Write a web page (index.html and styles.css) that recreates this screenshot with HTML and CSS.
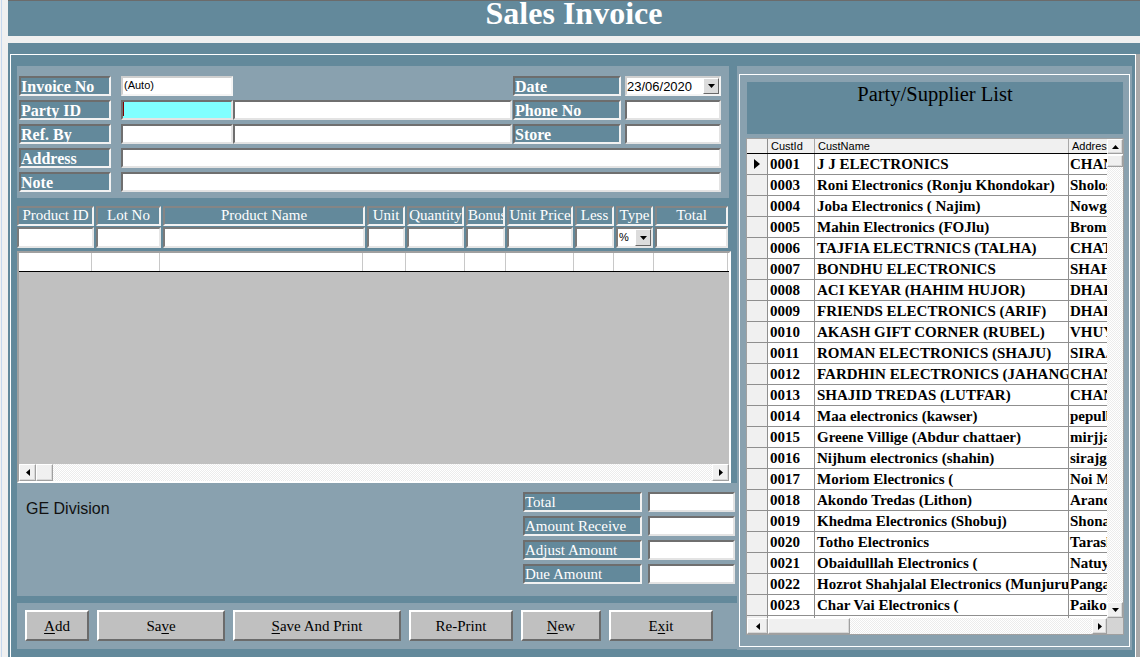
FILE: index.html
```html
<!DOCTYPE html>
<html>
<head>
<meta charset="utf-8">
<title>Sales Invoice</title>
<link rel="stylesheet" href="styles.css">
</head>
<body>
<div class="window">
  <div class="edge"></div>
  <div class="main">
    <div class="titlebar">Sales Invoice</div>
    <div class="band"></div>
    <div class="workspace">
      <div class="outer">
        <div class="left">
          <div class="form">
            <div class="lbl c1">Invoice No</div>
            <div class="inp light c3 auto">(Auto)</div>
            <div class="lbl c6">Date</div>
            <div class="inp light c8 date"><span class="dtext">23/06/2020</span><span class="ddbtn"><svg width="7" height="4" viewBox="0 0 7 4"><path d="M0 0H7L3.5 4Z"/></svg></span></div>

            <div class="lbl c1">Party ID</div>
            <div class="inp c3 cyan"><span class="caret"></span></div>
            <div class="inp c4"></div>
            <div class="lbl c6">Phone No</div>
            <div class="inp c8"></div>

            <div class="lbl c1">Ref. By</div>
            <div class="inp c3"></div>
            <div class="inp c4"></div>
            <div class="lbl c6">Store</div>
            <div class="inp c8"></div>

            <div class="lbl c1">Address</div>
            <div class="inp cwide"></div>

            <div class="lbl c1">Note</div>
            <div class="inp cwide"></div>
          </div>

          <div class="pcols phead">
            <div class="ph">Product ID</div>
            <div class="ph">Lot No</div>
            <div class="ph">Product Name</div>
            <div class="ph">Unit</div>
            <div class="ph">Quantity</div>
            <div class="ph">Bonus</div>
            <div class="ph">Unit Price</div>
            <div class="ph">Less</div>
            <div class="ph">Type</div>
            <div class="ph">Total</div>
          </div>
          <div class="pcols pinrow">
            <div class="pi"></div>
            <div class="pi"></div>
            <div class="pi"></div>
            <div class="pi"></div>
            <div class="pi"></div>
            <div class="pi"></div>
            <div class="pi"></div>
            <div class="pi"></div>
            <div class="pi ptype"><span class="pct">%</span><span class="ddbtn tbtn"><svg width="7" height="4" viewBox="0 0 7 4"><path d="M0 0H7L3.5 4Z"/></svg></span></div>
            <div class="pi"></div>
          </div>

          <div class="grid">
            <div class="ghead">
              <div class="gc" style="width:73px"></div>
              <div class="gc" style="width:68px"></div>
              <div class="gc" style="width:203px"></div>
              <div class="gc" style="width:43px"></div>
              <div class="gc" style="width:59px"></div>
              <div class="gc" style="width:41px"></div>
              <div class="gc" style="width:68px"></div>
              <div class="gc" style="width:40px"></div>
              <div class="gc" style="width:40px"></div>
              <div class="gc" style="width:74px"></div>
            </div>
            <div class="garea"></div>
            <div class="hscroll">
              <div class="sbtn"><svg width="4" height="7" viewBox="0 0 4 7"><path d="M4 0V7L0 3.5Z"/></svg></div>
              <div class="sthumb"></div>
              <div class="strack"></div>
              <div class="sbtn"><svg width="4" height="7" viewBox="0 0 4 7"><path d="M0 0V7L4 3.5Z"/></svg></div>
            </div>
          </div>

          <div class="lower">
            <div class="ge">GE Division</div>
            <div class="totals">
              <div class="tl">Total</div><div class="inp"></div>
              <div class="tl">Amount Receive</div><div class="inp"></div>
              <div class="tl">Adjust Amount</div><div class="inp"></div>
              <div class="tl">Due Amount</div><div class="inp"></div>
            </div>
          </div>

          <div class="buttons">
            <div class="btn w64"><span><u>A</u>dd</span></div>
            <div class="btn w128"><span>Sa<u>v</u>e</span></div>
            <div class="btn w168"><span><u>S</u>ave And Print</span></div>
            <div class="btn w104"><span>Re-Print</span></div>
            <div class="btn w80"><span><u>N</u>ew</span></div>
            <div class="btn w104"><span>E<u>x</u>it</span></div>
          </div>
        </div>

        <div class="right">
          <div class="rbox">
            <div class="rhead">Party/Supplier List</div>
            <div class="list">
              <div class="lcontent">
                <div class="lrow lhdr">
                  <div class="sel"></div>
                  <div class="lc cid">CustId</div>
                  <div class="lc cname">CustName</div>
                  <div class="lc caddr">Address</div>
                </div>
                <div class="lrows">
                  <div class="lrow"><div class="sel"><svg width="6" height="10" viewBox="0 0 6 10"><path d="M0 0L6 5L0 10Z"/></svg></div><div class="lc cid">0001</div><div class="lc cname">J J ELECTRONICS</div><div class="lc caddr">CHANDPUR</div></div>
                  <div class="lrow"><div class="sel"></div><div class="lc cid">0003</div><div class="lc cname">Roni Electronics (Ronju Khondokar)</div><div class="lc caddr">Sholoshohor</div></div>
                  <div class="lrow"><div class="sel"></div><div class="lc cid">0004</div><div class="lc cname">Joba Electronics ( Najim)</div><div class="lc caddr">Nowgaon</div></div>
                  <div class="lrow"><div class="sel"></div><div class="lc cid">0005</div><div class="lc cname">Mahin Electronics (FOJlu)</div><div class="lc caddr">Brommonbaria</div></div>
                  <div class="lrow"><div class="sel"></div><div class="lc cid">0006</div><div class="lc cname">TAJFIA ELECTRNICS (TALHA)</div><div class="lc caddr">CHATMOHOR</div></div>
                  <div class="lrow"><div class="sel"></div><div class="lc cid">0007</div><div class="lc cname">BONDHU ELECTRONICS</div><div class="lc caddr">SHAHRASTI</div></div>
                  <div class="lrow"><div class="sel"></div><div class="lc cid">0008</div><div class="lc cname">ACI KEYAR (HAHIM HUJOR)</div><div class="lc caddr">DHAKA</div></div>
                  <div class="lrow"><div class="sel"></div><div class="lc cid">0009</div><div class="lc cname">FRIENDS ELECTRONICS (ARIF)</div><div class="lc caddr">DHAKA</div></div>
                  <div class="lrow"><div class="sel"></div><div class="lc cid">0010</div><div class="lc cname">AKASH GIFT CORNER (RUBEL)</div><div class="lc caddr">VHUYAPUR</div></div>
                  <div class="lrow"><div class="sel"></div><div class="lc cid">0011</div><div class="lc cname">ROMAN ELECTRONICS (SHAJU)</div><div class="lc caddr">SIRAJGANJ</div></div>
                  <div class="lrow"><div class="sel"></div><div class="lc cid">0012</div><div class="lc cname">FARDHIN ELECTRONICS (JAHANGIR)</div><div class="lc caddr">CHANDPUR</div></div>
                  <div class="lrow"><div class="sel"></div><div class="lc cid">0013</div><div class="lc cname">SHAJID TREDAS (LUTFAR)</div><div class="lc caddr">CHANDPUR</div></div>
                  <div class="lrow"><div class="sel"></div><div class="lc cid">0014</div><div class="lc cname">Maa electronics (kawser)</div><div class="lc caddr">pepulbari</div></div>
                  <div class="lrow"><div class="sel"></div><div class="lc cid">0015</div><div class="lc cname">Greene Villige (Abdur chattaer)</div><div class="lc caddr">mirjjapur</div></div>
                  <div class="lrow"><div class="sel"></div><div class="lc cid">0016</div><div class="lc cname">Nijhum electronics (shahin)</div><div class="lc caddr">sirajganj</div></div>
                  <div class="lrow"><div class="sel"></div><div class="lc cid">0017</div><div class="lc cname">Moriom Electronics (</div><div class="lc caddr">Noi Mile</div></div>
                  <div class="lrow"><div class="sel"></div><div class="lc cid">0018</div><div class="lc cname">Akondo Tredas (Lithon)</div><div class="lc caddr">Arandi</div></div>
                  <div class="lrow"><div class="sel"></div><div class="lc cid">0019</div><div class="lc cname">Khedma Electronics (Shobuj)</div><div class="lc caddr">Shonatola</div></div>
                  <div class="lrow"><div class="sel"></div><div class="lc cid">0020</div><div class="lc cname">Totho Electronics</div><div class="lc caddr">Tarash</div></div>
                  <div class="lrow"><div class="sel"></div><div class="lc cid">0021</div><div class="lc cname">Obaidulllah Electronics (</div><div class="lc caddr">Natuypara</div></div>
                  <div class="lrow"><div class="sel"></div><div class="lc cid">0022</div><div class="lc cname">Hozrot Shahjalal Electronics (Munjurul)</div><div class="lc caddr">Pangasi</div></div>
                  <div class="lrow"><div class="sel"></div><div class="lc cid">0023</div><div class="lc cname">Char Vai Electronics (</div><div class="lc caddr">Paikosha</div></div>
                  <div class="lrow"><div class="sel"></div><div class="lc cid">0024</div><div class="lc cname">Mayer Doa Electronics</div><div class="lc caddr">Ullapara</div></div>
                </div>
              </div>
              <div class="vscroll">
                <div class="vbtn"><svg width="7" height="4" viewBox="0 0 7 4"><path d="M0 4H7L3.5 0Z"/></svg></div>
                <div class="vthumb"></div>
                <div class="vtrack"></div>
                <div class="vbtn vdown"><svg width="7" height="4" viewBox="0 0 7 4"><path d="M0 0H7L3.5 4Z"/></svg></div>
              </div>
              <div class="lhscroll">
                <div class="lsbtn lleft"><svg width="4" height="7" viewBox="0 0 4 7"><path d="M4 0V7L0 3.5Z"/></svg></div>
                <div class="lthumb"></div>
                <div class="strack"></div>
                <div class="lsbtn lright"><svg width="4" height="7" viewBox="0 0 4 7"><path d="M0 0V7L4 3.5Z"/></svg></div>
              </div>
              <div class="corner"></div>
            </div>
          </div>
        </div>
      </div>
    </div>
  </div>
</div>
</body>
</html>
```

FILE: styles.css
```css
* { box-sizing: border-box; }
html, body { margin: 0; padding: 0; }
body {
  width: 1140px;
  height: 657px;
  overflow: hidden;
  background: #f0f0f0;
  font-family: "Liberation Serif", "Times New Roman", serif;
}
svg path { fill: #000; }

.window { display: flex; height: 657px; }
.edge {
  width: 8px;
  flex: none;
  background: linear-gradient(to right, #f0f0f0 1px, #c6d8ee 1px, #c6d8ee 2px, #f0f0f0 2px);
}
.main { flex: 1; display: flex; flex-direction: column; min-width: 0; }

.titlebar {
  height: 36px;
  flex: none;
  border-top: 1px solid #6b6b6b;
  background: #63899b;
  color: #fff;
  font-weight: bold;
  font-size: 32px;
  line-height: 25px;
  text-align: center;
}
.band { height: 7px; flex: none; background: #f0f0f0; }
.workspace {
  flex: 1;
  background: #63899b;
  padding: 11px 0 0 2px;
}
.outer {
  width: 1126px;
  height: 603px;
  border: 1px solid #ffffff;
  border-bottom: none;
  box-shadow: 4px 0 0 #a9a9a9;
  display: flex;
  padding: 11px 3px 0 6px;
}

/* ---------- left column ---------- */
.left { width: 720px; flex: none; display: flex; flex-direction: column; }

.form {
  width: 712px;
  height: 132px;
  background: #89a1af;
  padding: 10px 0 0 2px;
  display: grid;
  grid-template-columns: 92px 10px 112px 279px 1px 108px 4px 96px;
  grid-auto-rows: 20px;
  row-gap: 4px;
}
.c1 { grid-column: 1; }
.c3 { grid-column: 3; }
.c4 { grid-column: 4; }
.c6 { grid-column: 6; }
.c8 { grid-column: 8; }
.cwide { grid-column: 3 / 9; }

.lbl {
  background: #63899b;
  border: 2px solid;
  border-color: #6d6d6d #f2f2f2 #f2f2f2 #6d6d6d;
  color: #fff;
  font-weight: bold;
  font-size: 16px;
  line-height: 16px;
  padding-top: 1px;
  white-space: nowrap;
  overflow: hidden;
}
.inp {
  background: #fff;
  border: 2px solid;
  border-color: #6f6f6f #e3e3e3 #e3e3e3 #6f6f6f;
}
.inp.light { border-color: #cfcfcf #f4f4f4 #f4f4f4 #cfcfcf; }
.auto {
  font-family: "Liberation Sans", Arial, sans-serif;
  font-size: 11px;
  line-height: 13px;
  padding-left: 1px;
  padding-top: 1px;
  color: #000;
}
.date {
  display: flex;
  align-items: flex-start;
  font-family: "Liberation Sans", Arial, sans-serif;
  font-size: 13px;
  color: #000;
}
.dtext { flex: 1; line-height: 18px; }
.ddbtn {
  width: 16px;
  height: 16px;
  flex: none;
  background: #dcdcdc;
  border: 1px solid;
  border-color: #ffffff #696969 #696969 #ffffff;
  display: flex;
  align-items: center;
  justify-content: center;
}
.cyan { background: #80ffff; display: flex; padding-left: 0; }
.caret { width: 1px; height: 14px; background: #800000; }

.pcols {
  display: grid;
  grid-template-columns: 77px 65px 202px 38px 57px 39px 66px 39px 37px 73px;
  column-gap: 2px;
}
.phead { height: 20px; margin-top: 8px; }
.ph {
  background: #63899b;
  border: 2px solid;
  border-color: #858585 #f2f2f2 #f2f2f2 #858585;
  color: #fff;
  font-size: 15px;
  line-height: 15px;
  text-align: center;
  white-space: nowrap;
  overflow: hidden;
}
.pinrow { height: 21px; margin-top: 1px; }
.pi {
  background: #fff;
  border: 2px solid;
  border-color: #7a7a7a #e6e6e6 #e6e6e6 #7a7a7a;
}
.ptype { display: flex; align-items: flex-start; }
.pct {
  flex: 1;
  font-family: "Liberation Sans", Arial, sans-serif;
  font-size: 11px;
  line-height: 17px;
  padding-left: 1px;
  color: #000;
}
.tbtn { width: 16px; height: 17px; }

.grid {
  width: 714px;
  height: 232px;
  margin-top: 3px;
  border: 2px solid;
  border-color: #a0a0a0 #ffffff #ffffff #a0a0a0;
  background: #c0c0c0;
  display: flex;
  flex-direction: column;
}
.ghead {
  height: 19px;
  flex: none;
  background: #fff;
  border-bottom: 1px solid #000;
  display: flex;
}
.gc { height: 18px; border-right: 1px solid #c8c8c8; flex: none; }
.garea { flex: 1; }
.hscroll { height: 17px; flex: none; display: flex; }
.sbtn, .sthumb, .lsbtn, .lthumb, .vbtn, .vthumb {
  background: #f0f0f0;
  border: 1px solid;
  border-color: #ffffff #a0a0a0 #a0a0a0 #ffffff;
  box-shadow: inset -1px -1px 0 #d8d8d8;
  display: flex;
  align-items: center;
  justify-content: center;
  flex: none;
}
.sbtn { width: 17px; height: 17px; }
.sthumb { width: 17px; height: 17px; }
.strack {
  flex: 1;
  background: repeating-conic-gradient(#ffffff 0 25%, #ececec 0 50%) 0 0 / 2px 2px;
}

.lower {
  height: 113px;
  flex: none;
  background: #89a1af;
  display: flex;
  justify-content: space-between;
}
.ge {
  font-family: "Liberation Sans", Arial, sans-serif;
  font-size: 16px;
  line-height: 18px;
  color: #111;
  padding: 17px 0 0 9px;
}
.totals {
  display: grid;
  grid-template-columns: 119px 87px;
  column-gap: 6px;
  row-gap: 4px;
  grid-auto-rows: 20px;
  align-content: start;
  padding: 9px 2px 0 0;
}
.tl {
  background: #63899b;
  border: 2px solid;
  border-color: #6d6d6d #f2f2f2 #f2f2f2 #6d6d6d;
  color: #fff;
  font-size: 15px;
  line-height: 15px;
  padding-top: 1px;
  white-space: nowrap;
  overflow: hidden;
}

.buttons {
  height: 46px;
  flex: none;
  margin-top: 7px;
  background: #89a1af;
  padding: 7px 0 0 8px;
  display: flex;
  align-items: flex-start;
  gap: 8px;
}
.btn {
  height: 31px;
  background: #c0c0c0;
  border: 2px solid;
  border-color: #ffffff #6b6b6b #6b6b6b #ffffff;
  font-size: 15px;
  color: #000;
  display: flex;
  align-items: center;
  justify-content: center;
  padding-top: 1px;
  flex: none;
}
.btn u { text-underline-offset: 2px; }
.w64 { width: 64px; }
.w80 { width: 80px; }
.w104 { width: 104px; }
.w128 { width: 128px; }
.w168 { width: 168px; }

/* ---------- right column ---------- */
.right {
  width: 395px;
  height: 584px;
  flex: none;
  background: #89a1af;
  padding: 8px 2px 3px 2px;
}
.rbox {
  width: 391px;
  height: 573px;
  border: 1px solid #ffffff;
  padding: 7px 6px 0 7px;
}
.rhead {
  height: 52px;
  background: #63899b;
  color: #000;
  font-size: 20.5px;
  line-height: 20px;
  padding-top: 2px;
  text-align: center;
}
.list {
  width: 378px;
  height: 497px;
  margin-top: 4px;
  margin-left: -1px;
  border: 1px solid #a0a0a0;
  background: #fff;
  display: grid;
  grid-template-columns: 360px 16px;
  grid-template-rows: 479px 16px;
}
.lcontent { display: flex; flex-direction: column; overflow: hidden; }
.lrows { height: 464px; overflow: hidden; }
.lrow {
  display: flex;
  height: 21px;
  border-bottom: 1px solid #8f8f8f;
}
.lrow .lc, .lrow .sel { height: 20px; }
.sel {
  width: 21px;
  flex: none;
  background: #f0f0f0;
  border-right: 1px solid #8f8f8f;
  display: flex;
  align-items: center;
  justify-content: center;
}
.lc {
  flex: none;
  white-space: nowrap;
  overflow: hidden;
  font-weight: bold;
  font-size: 15px;
  line-height: 18px;
  color: #000;
  padding-left: 2px;
  padding-top: 1px;
  border-right: 1px solid #8f8f8f;
}
.cid { width: 47px; }
.cname { width: 254px; }
.caddr { width: 38px; border-right: none; padding-left: 1px; }
.lhdr {
  height: 15px;
  flex: none;
  border-bottom: 1px solid #000;
}
.lhdr .sel, .lhdr .lc { height: 14px; }
.lhdr .lc {
  background: #f0f0f0;
  font-family: "Liberation Sans", Arial, sans-serif;
  font-weight: normal;
  font-size: 11px;
  line-height: 14px;
  padding-left: 3px;
  padding-top: 0;
  border-right-color: #a8a8a8;
}

.vscroll { display: flex; flex-direction: column; }
.vbtn { width: 16px; height: 15px; }
.vthumb { width: 16px; height: 12px; margin-top: 1px; }
.vtrack {
  flex: 1;
  background: repeating-conic-gradient(#ffffff 0 25%, #ececec 0 50%) 0 0 / 2px 2px;
}
.vdown { height: 16px; }
.lhscroll { display: flex; }
.lsbtn { height: 16px; }
.lleft { width: 21px; }
.lright { width: 15px; }
.lthumb { width: 82px; height: 16px; }
.corner { background: #d4d4d4; }
```
